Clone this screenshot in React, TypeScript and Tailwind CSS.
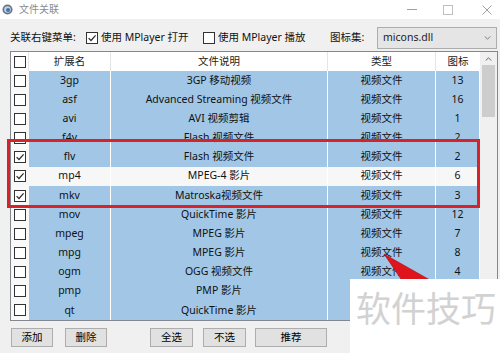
import { type ReactNode } from "react";

const rows = [
  { ext: "3gp", desc: "3GP 移动视频", icon: "13" },
  { ext: "asf", desc: "Advanced Streaming 视频文件", icon: "16" },
  { ext: "avi", desc: "AVI 视频剪辑", icon: "1" },
  { ext: "f4v", desc: "Flash 视频文件", icon: "2" },
  { ext: "flv", desc: "Flash 视频文件", icon: "2", on: true },
  { ext: "mp4", desc: "MPEG-4 影片", icon: "6", on: true, plain: true },
  { ext: "mkv", desc: "Matroska视频文件", icon: "3", on: true },
  { ext: "mov", desc: "QuickTime 影片", icon: "12" },
  { ext: "mpeg", desc: "MPEG 影片", icon: "7" },
  { ext: "mpg", desc: "MPEG 影片", icon: "8" },
  { ext: "ogm", desc: "OGG 视频文件", icon: "4" },
  // type / icon of the last two rows sit under the watermark
  { ext: "pmp", desc: "PMP 影片", icon: "", hidden: true },
  { ext: "qt", desc: "QuickTime 影片", icon: "", hidden: true },
];

function Check({ on }: { on?: boolean }) {
  return (
    <span className="flex h-[12px] w-[12px] shrink-0 items-center justify-center border border-[#333] bg-white">
      {on && (
        <svg viewBox="0 0 10 10" className="h-[10px] w-[10px]">
          <path d="M1.6 5.1 L4 7.5 L8.6 2.3" fill="none" stroke="#2b2b2b" strokeWidth="1.2" />
        </svg>
      )}
    </span>
  );
}

function Btn({ w, children }: { w: string; children: ReactNode }) {
  return (
    <button className={`flex h-[19px] items-center justify-center border border-[#adadad] bg-[#e1e1e1] text-[10.5px] text-black ${w}`}>
      {children}
    </button>
  );
}

export default function App() {
  return (
    <div className="relative h-[353px] w-[500px] overflow-hidden bg-[#f0f0f0] font-['Noto_Sans','Noto_Sans_CJK_SC',sans-serif] text-[10.5px] text-[#111]">
      {/* title bar */}
      <div className="flex h-[19px] items-center bg-white">
        <svg viewBox="0 0 12 12" className="ml-[2px] h-[11px] w-[11px]">
          <circle cx="6" cy="6" r="5.5" fill="#6b7480" />
          <circle cx="6" cy="6" r="3.6" fill="#c9d2dc" />
          <circle cx="6.6" cy="6.6" r="2.2" fill="#2f78c4" />
        </svg>
        <span className="ml-[6px] text-[10px] text-[#8c8c8c]">文件关联</span>
        <div className="ml-auto flex h-full items-center">
          <span className="mr-[26px] h-px w-[10px] bg-[#a0a0a0]" />
          <span className="mr-[29px] h-[10px] w-[10px] border border-[#c0c0c0]" />
          <svg viewBox="0 0 10 10" className="mr-[8px] h-[10px] w-[10px]">
            <path d="M0.5 0.5 L9.5 9.5 M9.5 0.5 L0.5 9.5" stroke="#a0a0a0" strokeWidth="1" />
          </svg>
        </div>
      </div>

      {/* toolbar */}
      <div className="mt-[8px] flex h-[22px] items-center pl-[10px]">
        <span className="w-[76px]">关联右键菜单:</span>
        <span className="flex w-[117px] items-center gap-[3px]">
          <Check on />
          <span>使用 MPlayer 打开</span>
        </span>
        <span className="flex w-[127px] items-center gap-[3px]">
          <Check />
          <span>使用 MPlayer 播放</span>
        </span>
        <span className="w-[47px]">图标集:</span>
        <div className="flex h-[22px] w-[120px] items-center border border-[#adadad] bg-[#e5e5e5] pl-[5px] pr-[5px]">
          <span className="text-[#222]">micons.dll</span>
          <svg viewBox="0 0 8 5" className="ml-auto h-[4px] w-[7px]">
            <path d="M0.5 0.5 L4 4 L7.5 0.5" fill="none" stroke="#666" strokeWidth="1" />
          </svg>
        </div>
      </div>

      {/* list */}
      <div className="ml-[10px] mt-[2px] flex h-[270px] w-[488px] border border-[#828790] bg-[#f9f9f9]">
        <div className="flex w-[469px] flex-col">
          <div className="flex h-[19px] shrink-0 bg-white text-[#222]">
            <div className="flex w-[18px] items-center justify-center border-r border-[#e5e5e5]">
              <Check />
            </div>
            <div className="flex w-[82px] items-center justify-center border-r border-[#e5e5e5]">扩展名</div>
            <div className="flex w-[217px] items-center justify-center border-r border-[#e5e5e5]">文件说明</div>
            <div className="flex w-[108px] items-center justify-center border-r border-[#e5e5e5]">类型</div>
            <div className="flex w-[44px] items-center justify-center">图标</div>
          </div>
          {rows.map((r) => {
            const cell = r.plain ? "bg-[#f7f7f7]" : "bg-[#a2c7e6]";
            return (
              <div key={r.ext} className="flex flex-1">
                <div className={`flex w-[18px] items-center justify-center ${r.plain ? "bg-[#f7f7f7]" : ""}`}>
                  <Check on={r.on} />
                </div>
                <div className={`flex w-[82px] items-center justify-center border-r border-white ${cell}`}>{r.ext}</div>
                <div className={`flex w-[217px] items-center justify-center border-r border-white ${cell}`}>{r.desc}</div>
                <div className={`flex w-[108px] items-center justify-center border-r border-white ${cell}`}>
                  {r.hidden ? "" : "视频文件"}
                </div>
                <div className={`flex w-[44px] items-center justify-center border-r border-white ${cell}`}>{r.icon}</div>
              </div>
            );
          })}
        </div>
        {/* scrollbar */}
        <div className="flex w-[17px] flex-col bg-[#f0f0f0]">
          <div className="flex h-[13px] items-center justify-center">
            <svg viewBox="0 0 8 5" className="h-[4px] w-[7px]">
              <path d="M0.5 4.5 L4 1 L7.5 4.5" fill="none" stroke="#606060" strokeWidth="1.2" />
            </svg>
          </div>
          <div className="mx-[2px] h-[52px] bg-[#cdcdcd]" />
        </div>
      </div>

      {/* buttons */}
      <div className="mt-[7px] flex pl-[11px]">
        <Btn w="w-[42px]">添加</Btn>
        <div className="ml-[12px]">
          <Btn w="w-[42px]">删除</Btn>
        </div>
        <div className="ml-[43px]">
          <Btn w="w-[43px]">全选</Btn>
        </div>
        <div className="ml-[10px]">
          <Btn w="w-[43px]">不选</Btn>
        </div>
        <div className="ml-[9px]">
          <Btn w="w-[72px]">推荐</Btn>
        </div>
      </div>

      {/* annotation overlays */}
      <div className="absolute left-[7px] top-[139px] h-[69px] w-[473px] border-[3px] border-[#d8222a]" />
      <svg className="absolute left-0 top-0 h-[353px] w-[500px]" viewBox="0 0 500 353">
        <polygon points="384,254 430,280 403,282" fill="#e0141c" stroke="#a50f14" strokeWidth="0.6" />
      </svg>
      <div className="absolute left-[350px] top-[279px] flex h-[74px] w-[150px] bg-white pl-[6px] pt-[10px]">
        <span className="text-[35px] leading-[40px] text-[#d2d2d2]">软件技巧</span>
      </div>
    </div>
  );
}
